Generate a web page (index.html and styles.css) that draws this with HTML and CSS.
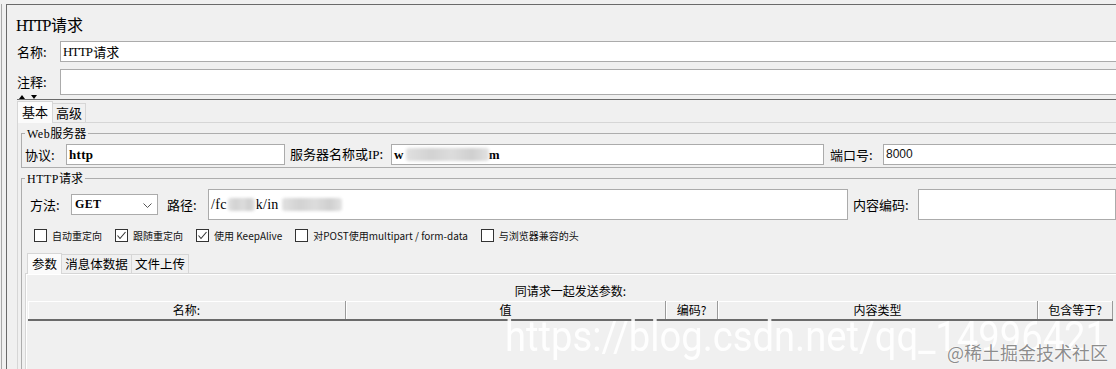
FILE: index.html
```html
<!DOCTYPE html>
<html lang="zh">
<head>
<meta charset="utf-8">
<title>HTTP请求</title>
<link rel="stylesheet" href="styles.css">
</head>
<body>
<div class="screen">
  <div class="outer">
    <div class="main">
      <div class="title"><span class="lat">HTTP</span>请求</div>
      <div class="field-row name-row">
        <span class="lbl">名称:</span>
        <div class="input"><span class="lat-sm">HTTP</span>请求</div>
      </div>
      <div class="field-row comment-row">
        <span class="lbl">注释:</span>
        <div class="input tall"></div>
      </div>
      <div class="lower">
        <svg class="split-arrows" width="20" height="5" viewBox="0 0 20 5"><polygon points="0,4 3,0 6,4" fill="#000"/><polygon points="12,0 18,0 15,4" fill="#000"/></svg>
        <div class="tabs">
          <div class="tab active t-basic">基本</div>
          <div class="tab t-adv">高级</div>
        </div>
        <div class="tabpanel">
          <fieldset class="group web">
            <legend><span class="lat-leg">Web</span>服务器</legend>
            <div class="web-row">
              <span class="lbl l-proto">协议:</span>
              <div class="input i-proto"><span class="serif-val">http</span></div>
              <span class="lbl l-server">服务器名称或<span class="ip">IP</span>:</span>
              <div class="input i-server"><span class="serif-val">w</span><span class="blur b1"></span><span class="serif-val">m</span></div>
              <span class="lbl l-port">端口号:</span>
              <div class="input i-port"><span class="sans-val">8000</span></div>
            </div>
          </fieldset>
          <fieldset class="group http">
            <legend><span class="lat-leg">HTTP</span>请求</legend>
            <div class="method-row">
              <span class="lbl l-method">方法:</span>
              <div class="select"><span class="serif-val">GET</span><svg class="chev" width="9" height="5" viewBox="0 0 9 5"><polyline points="0.5,0.5 4.5,4.5 8.5,0.5" fill="none" stroke="#555" stroke-width="1"/></svg></div>
              <span class="lbl l-path">路径:</span>
              <div class="input i-path"><span class="serif-val">/fc</span><span class="blur b2"></span><span class="serif-val">k/in</span><span class="blur b3"></span></div>
              <span class="lbl l-enc">内容编码:</span>
              <div class="input i-enc"></div>
            </div>
            <div class="check-row">
              <label class="chk"><span class="box"></span><span class="ct">自动重定向</span></label>
              <label class="chk"><span class="box"><svg width="11" height="11" viewBox="0 0 11 11"><polyline points="1.5,5.5 4,8.5 9.5,2" fill="none" stroke="#333" stroke-width="1.1"/></svg></span><span class="ct">跟随重定向</span></label>
              <label class="chk"><span class="box"><svg width="11" height="11" viewBox="0 0 11 11"><polyline points="1.5,5.5 4,8.5 9.5,2" fill="none" stroke="#333" stroke-width="1.1"/></svg></span><span class="ct">使用 KeepAlive</span></label>
              <label class="chk"><span class="box"></span><span class="ct">对POST使用multipart / form-data</span></label>
              <label class="chk"><span class="box"></span><span class="ct">与浏览器兼容的头</span></label>
            </div>
            <div class="tabs inner-tabs">
              <div class="tab active t-params">参数</div>
              <div class="tab t-body">消息体数据</div>
              <div class="tab t-files">文件上传</div>
            </div>
            <div class="inner-panel">
              <div class="caption">同请求一起发送参数:</div>
              <div class="thead">
                <div class="th c1">名称:</div>
                <div class="th c2">值</div>
                <div class="th c3">编码?</div>
                <div class="th c4">内容类型</div>
                <div class="th c5">包含等于?</div>
              </div>
            </div>
          </fieldset>
        </div>
      </div>
    </div>
  </div>
  <div class="wm-url">https://blog.csdn.net/qq_14996421</div>
  <div class="wm-juejin">@稀土掘金技术社区</div>
</div>
</body>
</html>
```

FILE: styles.css
```css
* { box-sizing: border-box; }
html, body { margin: 0; padding: 0; }
body {
  background: #f0f0f0;
  font-family: "Noto Sans CJK SC", "Noto Sans", sans-serif;
  font-size: 13px;
  color: #000;
  width: 1116px;
  height: 369px;
  overflow: hidden;
}
.screen { position: relative; width: 1116px; height: 369px; overflow: hidden; }
.outer {
  height: 369px;
  margin-left: 1px;
  border-left: 1px solid #a8a8a8;
  padding-left: 4px;
}
.main {
  margin-top: 4px;
  height: 365px;
  width: 1130px;
  border-left: 1px solid #6a6a6a;
  border-top: 1px solid #6a6a6a;
}
.title {
  margin-top: 10px;
  padding-left: 9px;
  font-size: 16px;
  line-height: 18px;
  height: 18px;
}
.lat { font-family: "Liberation Serif", serif; letter-spacing: -1.5px; margin-right: 1px; }
.lat-sm { font-family: "Liberation Serif", serif; font-size: 13px; letter-spacing: -0.8px; margin-right: 1px; }
.lat-leg { font-family: "Liberation Serif", serif; letter-spacing: 0.5px; }

.field-row { display: flex; align-items: center; padding-left: 10px; }
.lbl { white-space: nowrap; line-height: 16px; }
.field-row .lbl { width: 43px; }
.input {
  height: 21px;
  background: #fff;
  border: 1px solid #ababab;
  line-height: 19px;
  padding-left: 2px;
  white-space: nowrap;
  display: flex;
  align-items: center;
}
.name-row { margin-top: 8px; }
.name-row .input { flex: 1; margin-right: 10px; font-size: 13px; }
.comment-row { margin-top: 7px; }
.comment-row .input { flex: 1; height: 26px; margin-right: 10px; }

.lower {
  position: relative;
  margin-left: 10px;
  margin-top: 4px;
  border-top: 1px solid #6a6a6a;
}
.split-arrows { position: absolute; left: 2px; top: -5px; }

.tabs { display: flex; align-items: flex-end; height: 22px; }
.tab {
  height: 19px;
  border: 1px solid #d6d6d6;
  border-bottom: none;
  background: #f0f0f0;
  font-size: 13px;
  line-height: 17px;
  text-align: center;
  white-space: nowrap;
}
.tab.active { height: 22px; margin-bottom: -1px; background: #fbfbfb; position: relative; line-height: 19px; }
.t-basic { width: 36px; }
.t-adv { width: 33px; border-left: none; }

.tabpanel {
  border-top: 1px solid #d6d6d6;
  border-left: 1px solid #d6d6d6;
  padding-left: 3px;
  height: 260px;
}
.group {
  margin: 0;
  padding: 0;
  width: 1097px;
  min-width: 0;
  border: 1px solid #adadad;
}
.group legend {
  font-size: 12px;
  line-height: 14px;
  padding: 0 2px;
  margin-left: 3px;
}
.web { margin-top: 3px; }
.web-row { display: flex; align-items: center; padding: 3px 0 2px 3px; }
.l-proto { width: 41px; }
.i-proto { width: 219px; }
.l-server { width: 101px; margin-left: 5px; }
.i-server { width: 433px; }
.l-port { width: 53px; margin-left: 6px; }
.i-port { flex: 1; margin-right: -10px; }
.ip { font-family: "Liberation Serif", serif; }
.serif-val { font-family: "Liberation Serif", serif; font-size: 13px; font-weight: bold; letter-spacing: 0.3px; }
.sans-val { font-family: "Liberation Sans", sans-serif; font-size: 12px; color: #111; }
.blur {
  display: inline-block;
  height: 13px;
  background: linear-gradient(90deg, #e0e0e0, #d2d2d2 30%, #dcdcdc 55%, #cfcfcf 80%, #e2e2e2);
  filter: blur(1.5px);
  border-radius: 3px;
}
.b1 { width: 83px; margin: 0 0 0 2px; }
.b2 { width: 27px; margin: 0 1px; }
.b3 { width: 60px; margin-left: 3px; }

.http { margin-top: 3px; height: 200px; }
.method-row { display: flex; align-items: center; height: 34px; padding: 3px 1px 0 8px; }
.l-method { width: 41px; }
.select {
  width: 87px;
  height: 21px;
  background: #fff;
  border: 1px solid #ababab;
  display: flex;
  align-items: center;
  justify-content: space-between;
  padding: 0 5px 0 3px;
}
.select .serif-val { font-size: 12px; }
.chev { margin-top: 1px; }
.l-path { width: 41px; margin-left: 9px; }
.i-path { width: 640px; height: 31px; }
.i-path .serif-val { font-size: 14px; font-weight: normal; }
.l-enc { width: 65px; margin-left: 5px; }
.i-enc { flex: 1; height: 31px; }

.check-row { display: flex; align-items: center; margin-top: 9px; padding-left: 12px; height: 13px; gap: 13px; }
.chk { display: flex; align-items: center; gap: 5px; white-space: nowrap; height: 13px; }
.box {
  width: 13px; height: 13px;
  border: 1px solid #333;
  background: #fff;
  display: flex;
  align-items: center;
  justify-content: center;
}
.ct { font-size: 10px; line-height: 13px; color: #111; }

.inner-tabs { margin-top: 10px; padding-left: 5px; height: 21px; }
.inner-tabs .tab { font-size: 12.5px; }
.inner-tabs .tab.active { height: 21px; }
.t-params { width: 35px; }
.t-body { width: 70px; border-left: none; }
.t-files { width: 57px; border-left: none; }

.inner-panel {
  margin-left: 3px;
  border-top: 1px solid #d6d6d6;
  border-left: 1px solid #d6d6d6;
  box-shadow: inset 1px 1px 0 #fff;
  height: 100px;
  padding-left: 2px;
}
.caption {
  width: 1085px;
  padding-top: 9px;
  line-height: 16px;
  font-size: 12px;
  text-align: center;
}
.thead {
  display: flex;
  margin-top: 2px;
  height: 20px;
  width: 1085px;
  border-bottom: 2px solid #6a6a6a;
}
.th {
  height: 18px;
  font-size: 12px;
  line-height: 17px;
  text-align: center;
  border-right: 1px solid #9a9a9a;
  box-shadow: inset 1px 1px 0 #fff;
  white-space: nowrap;
}
.c1 { width: 318px; }
.c2 { width: 320px; }
.c3 { width: 52px; }
.c4 { width: 320px; }
.c5 { width: 75px; }

.wm-url {
  position: absolute;
  left: 505px;
  top: 315px;
  font-family: "Roboto", "Liberation Sans", sans-serif;
  font-size: 43px;
  line-height: 43px;
  color: rgba(255, 255, 255, 0.9);
  white-space: nowrap;
  transform: scaleX(0.888);
  transform-origin: 0 0;
}
.wm-juejin {
  position: absolute;
  left: 947px;
  top: 341px;
  font-size: 18px;
  line-height: 22px;
  color: rgba(120, 120, 120, 0.85);
  text-shadow: 0 0 2px #fff, 0 0 1px #fff;
  white-space: nowrap;
}
```
